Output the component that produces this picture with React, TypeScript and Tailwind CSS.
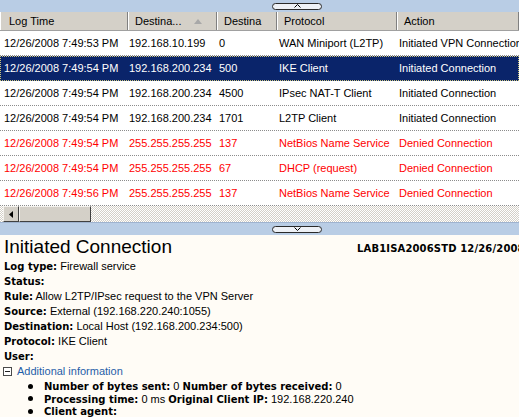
import React from 'react'

type LogRow = {
  time: string
  ip: string
  port: string
  proto: string
  action: string
  denied?: boolean
}

const rows: LogRow[] = [
  { time: '12/26/2008 7:49:53 PM', ip: '192.168.10.199', port: '0', proto: 'WAN Miniport (L2TP)', action: 'Initiated VPN Connection' },
  { time: '12/26/2008 7:49:54 PM', ip: '192.168.200.234', port: '500', proto: 'IKE Client', action: 'Initiated Connection' },
  { time: '12/26/2008 7:49:54 PM', ip: '192.168.200.234', port: '4500', proto: 'IPsec NAT-T Client', action: 'Initiated Connection' },
  { time: '12/26/2008 7:49:54 PM', ip: '192.168.200.234', port: '1701', proto: 'L2TP Client', action: 'Initiated Connection' },
  { time: '12/26/2008 7:49:54 PM', ip: '255.255.255.255', port: '137', proto: 'NetBios Name Service', action: 'Denied Connection', denied: true },
  { time: '12/26/2008 7:49:54 PM', ip: '255.255.255.255', port: '67', proto: 'DHCP (request)', action: 'Denied Connection', denied: true },
  { time: '12/26/2008 7:49:56 PM', ip: '255.255.255.255', port: '137', proto: 'NetBios Name Service', action: 'Denied Connection', denied: true },
]

const selected = 1

// pill-shaped splitter button
const Pill = ({ up }: { up: boolean }) => (
  <div className="w-[50px] h-[7px] rounded-full border border-[#2a2a2a] bg-[#eef1f6] flex items-center justify-center">
    <svg width="7" height="4" viewBox="0 0 7 4">
      {up ? (
        <path d="M0.5 3.5 L3.5 0.5 L6.5 3.5" fill="none" stroke="#000" strokeWidth="1" />
      ) : (
        <path d="M0.5 0.5 L3.5 3.5 L6.5 0.5" fill="none" stroke="#000" strokeWidth="1" />
      )}
    </svg>
  </div>
)

const Field = ({ label, value }: { label: string; value?: string }) => (
  <div className="leading-[15px] whitespace-nowrap">
    <span className="font-['DejaVu_Sans',sans-serif] font-bold text-[10px]">{label}</span>
    {value ? <span> {value}</span> : null}
  </div>
)

const Bullet = ({ children }: { children: React.ReactNode }) => (
  <li className="flex items-center h-[12.5px] whitespace-nowrap">
    <span className="ml-[24px] mr-[11px] w-[5px] h-[5px] rounded-full bg-black shrink-0" />
    <span>{children}</span>
  </li>
)

const B = ({ children }: { children: React.ReactNode }) => (
  <span className="font-['DejaVu_Sans',sans-serif] font-bold text-[10px]">{children}</span>
)

export default function App() {
  const headerCell = "h-full flex items-center pl-[6px] border-r border-r-[#808080] border-l border-l-white overflow-hidden whitespace-nowrap"

  return (
    <div className="w-[519px] h-[417px] overflow-hidden bg-[#fffcf6] font-['Liberation_Sans',Arial,sans-serif] text-[11px] text-black">
      {/* Top splitter bar */}
      <div className="h-[12px] bg-[#b9cde5] flex items-center pl-[272px]">
        <Pill up />
      </div>

      {/* Column headers */}
      <div className="h-[19px] bg-[#d4d0c8] grid grid-cols-[128px_89px_60px_120px_1fr] border-b border-b-[#a0a0a0]">
        <div className={headerCell + " pl-[8px]"}>Log Time</div>
        <div className={headerCell + " pl-[4px]"}>
          <span>Destina...</span>
          <svg className="ml-[13px]" width="8" height="5" viewBox="0 0 8 5">
            <path d="M0 5 L4 0 L8 5 Z" fill="#a8a8a8" />
          </svg>
        </div>
        <div className={headerCell}>Destina</div>
        <div className={headerCell}>Protocol</div>
        <div className={headerCell}>Action</div>
      </div>

      {/* Rows */}
      <div className="bg-white">
        {rows.map((r, i) => {
          const sel = i === selected
          const color = sel ? 'text-white' : r.denied ? 'text-[#ff0000]' : 'text-black'
          return (
            <div
              key={i}
              className={`h-[25px] grid grid-cols-[128px_89px_60px_120px_1fr] items-center whitespace-nowrap border-b border-dotted border-b-[#8c8c8c] ${color} ${sel ? 'bg-[#0a246a] outline-1 outline-dotted outline-[#c9c27a] -outline-offset-1' : ''}`}
            >
              <div className="pl-[4px] overflow-hidden">{r.time}</div>
              <div className="pl-[1px] overflow-hidden">{r.ip}</div>
              <div className="pl-[2px] overflow-hidden">{r.port}</div>
              <div className="pl-[2px] overflow-hidden">{r.proto}</div>
              <div className="pl-[2px] overflow-hidden">{r.action}</div>
            </div>
          )
        })}
      </div>

      {/* Horizontal scrollbar */}
      <div className="h-[16px] flex bg-[repeating-conic-gradient(#d4d0c8_0_25%,#ffffff_0_50%)] bg-[length:2px_2px]">
        <div className="ml-[3px] w-[16px] h-[16px] bg-[#d4d0c8] border border-t-[#f4f2ee] border-l-[#f4f2ee] border-r-[#404040] border-b-[#404040] flex items-center justify-center">
          <svg width="4" height="7" viewBox="0 0 4 7">
            <path d="M4 0 L0 3.5 L4 7 Z" fill="#000" />
          </svg>
        </div>
        <div className="w-[72px] h-[16px] bg-[#d4d0c8] border border-t-[#f4f2ee] border-l-[#f4f2ee] border-r-[#404040] border-b-[#404040]" />
      </div>

      {/* Bottom splitter bar */}
      <div className="h-[13px] bg-[#b9cde5] border-t border-t-[#9fb3cf] flex items-center pl-[272px]">
        <Pill up={false} />
      </div>

      {/* Details pane */}
      <div className="pl-[4px]">
        <div className="flex items-start h-[23px] mt-[1px] whitespace-nowrap">
          <div className="w-[353px] shrink-0 text-[19px] leading-[22px]">Initiated Connection</div>
          <div className="mt-[5px] font-['DejaVu_Sans',sans-serif] font-bold text-[10px] tracking-[0.15px]">LAB1ISA2006STD 12/26/2008 7:49:54 PM</div>
        </div>
        <Field label="Log type:" value="Firewall service" />
        <Field label="Status:" />
        <Field label="Rule:" value="Allow L2TP/IPsec request to the VPN Server" />
        <Field label="Source:" value="External (192.168.220.240:1055)" />
        <Field label="Destination:" value="Local Host (192.168.200.234:500)" />
        <Field label="Protocol:" value="IKE Client" />
        <Field label="User:" />
        <div className="flex items-center h-[15px] text-[#1f5ea8]">
          <span className="ml-[-1px] mr-[5px] w-[9px] h-[9px] border border-[#4a4a4a] bg-white flex items-center justify-center">
            <span className="w-[5px] h-[1px] bg-[#222]" />
          </span>
          Additional information
        </div>
        <ul className="mt-[1px]">
          <Bullet>
            <B>Number of bytes sent:</B> 0 <B>Number of bytes received:</B> 0
          </Bullet>
          <Bullet>
            <B>Processing time:</B> 0 ms <B>Original Client IP:</B> 192.168.220.240
          </Bullet>
          <Bullet>
            <B>Client agent:</B>
          </Bullet>
        </ul>
      </div>
    </div>
  )
}
